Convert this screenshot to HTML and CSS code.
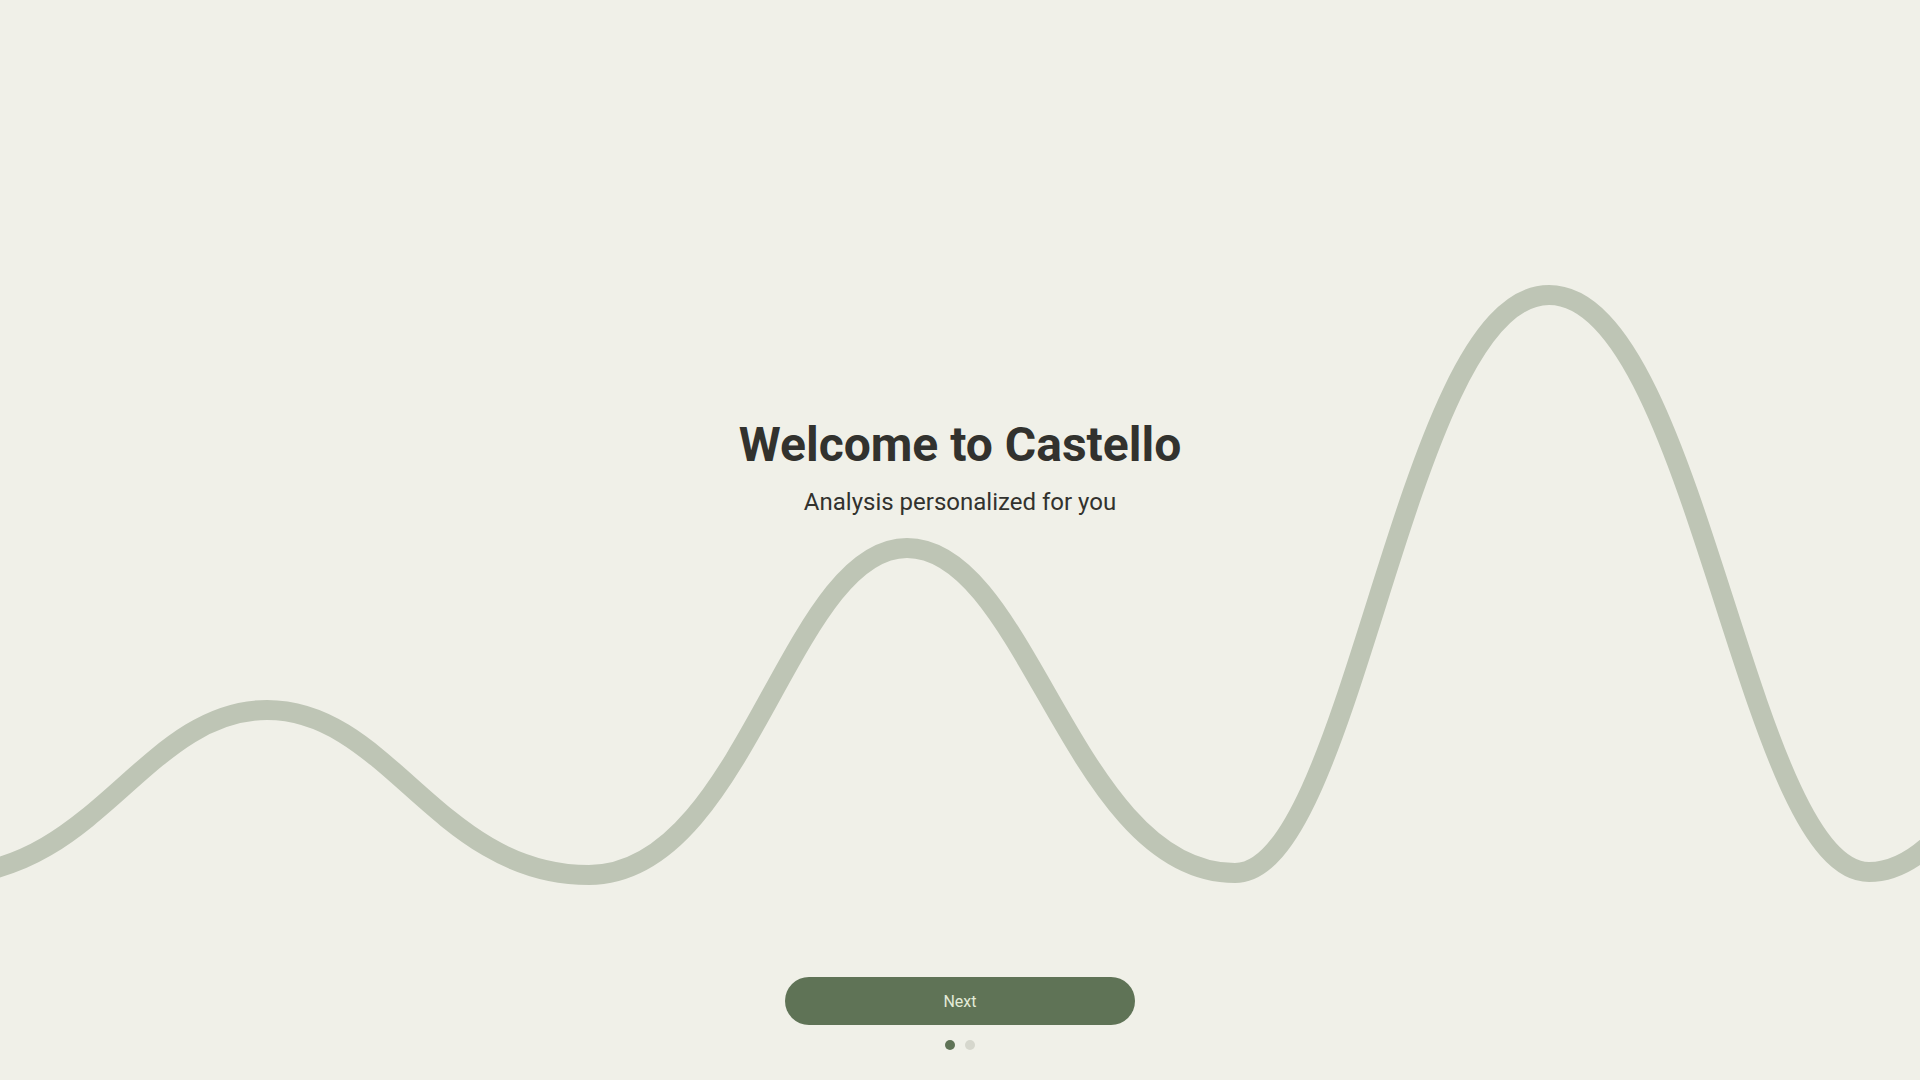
FILE: index.html
```html
<!DOCTYPE html>
<html lang="en">
<head>
<meta charset="utf-8">
<title>Welcome to Castello</title>
<link rel="stylesheet" href="styles.css">
</head>
<body>
<div class="screen">
  <svg class="wave" viewBox="0 0 1920 1080" width="1920" height="1080" aria-hidden="true">
    <path d="M -55 875 C 96 875 145 710 267 710 C 389 710 438 875 589 875 C 745 875 789 548 907 548 C 1028 548 1074 873 1235 873 C 1354 873 1405 295 1549 295 C 1696 295 1747 872 1869 872 C 1991 872 2042 560 2189 560" fill="none" stroke="#bec5b5" stroke-width="20" stroke-linecap="round"/>
  </svg>
  <main class="hero">
    <h1 class="title">Welcome to Castello</h1>
    <p class="subtitle">Analysis personalized for you</p>
  </main>
  <footer class="footer">
    <button class="next-btn" type="button">Next</button>
    <div class="dots">
      <span class="dot dot-active"></span>
      <span class="dot"></span>
    </div>
  </footer>
</div>
</body>
</html>
```

FILE: styles.css
```css
* { box-sizing: border-box; }
html, body {
  margin: 0;
  padding: 0;
  width: 100%;
  height: 100%;
  background: #f0f0e8;
  font-family: Roboto, "Liberation Sans", Arial, sans-serif;
  overflow: hidden;
}
.screen {
  position: relative;
  width: 1920px;
  height: 1080px;
  display: flex;
  flex-direction: column;
  align-items: center;
}
.wave {
  position: absolute;
  left: 0;
  top: 0;
  z-index: 0;
}
.hero {
  position: relative;
  z-index: 1;
  padding-top: 416px;
  display: flex;
  flex-direction: column;
  align-items: center;
}
.title {
  margin: 0;
  font-size: 48px;
  line-height: 1.2;
  font-weight: 700;
  color: #32322e;
}
.subtitle {
  margin: 14px 0 0;
  font-size: 24px;
  line-height: 1.2;
  font-weight: 400;
  color: #32322e;
}
.footer {
  position: relative;
  z-index: 1;
  margin-top: auto;
  padding-bottom: 30px;
  display: flex;
  flex-direction: column;
  align-items: center;
  gap: 15px;
}
.next-btn {
  width: 350px;
  height: 48px;
  border: none;
  border-radius: 24px;
  background: #5f7356;
  color: #e3ebd8;
  font-family: Roboto, "Liberation Sans", Arial, sans-serif;
  font-size: 16px;
  cursor: pointer;
}
.dots {
  display: flex;
  gap: 10px;
}
.dot {
  width: 10px;
  height: 10px;
  border-radius: 50%;
  background: #d6d7cd;
}
.dot-active {
  background: #5f7356;
}
```
